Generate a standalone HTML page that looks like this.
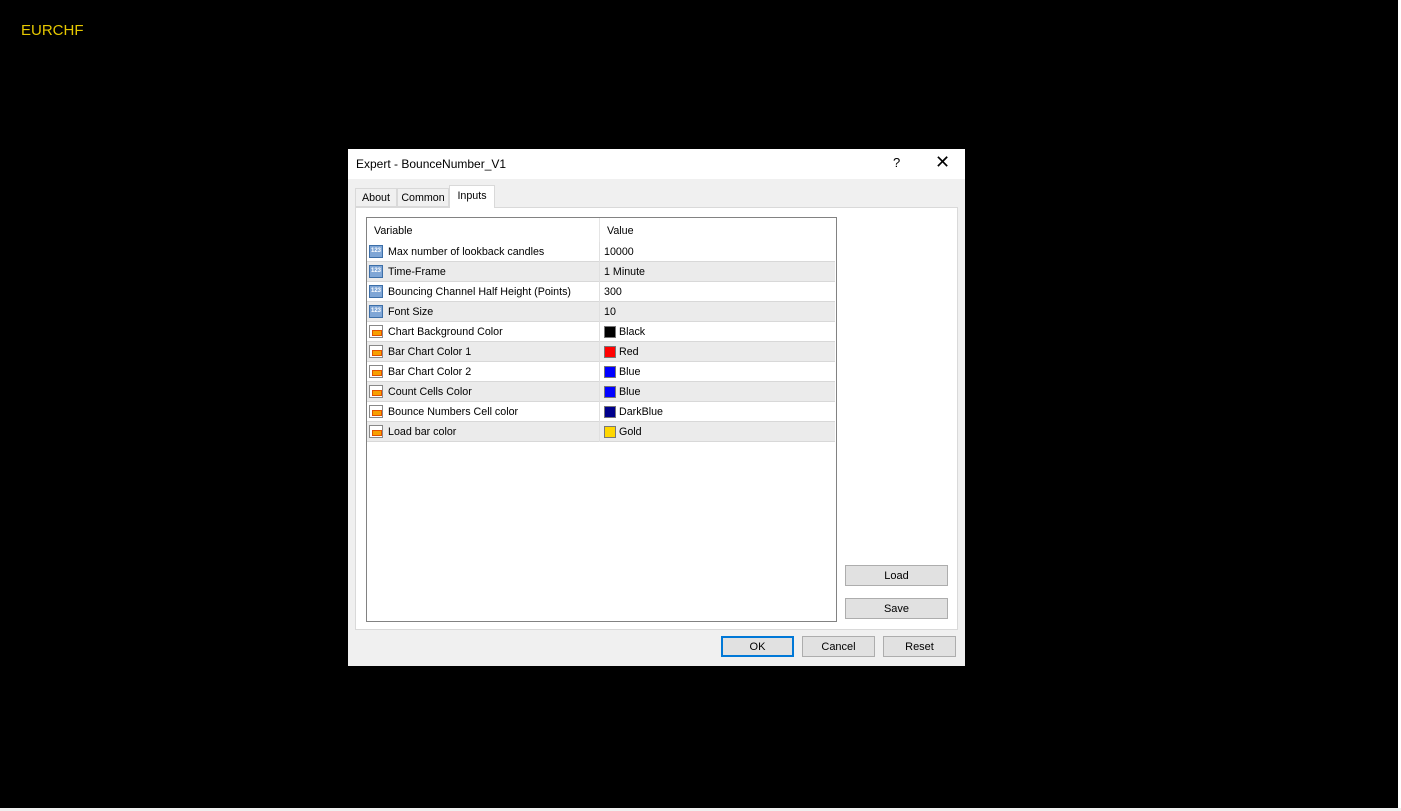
<!DOCTYPE html><html><head><style>
body{margin:0;width:1401px;height:811px;background:#000;position:relative;overflow:hidden;font-family:"Liberation Sans",sans-serif;font-size:10.7px;color:#000}
.a{position:absolute}
.btn{position:absolute;background:#e1e1e1;border:1px solid #adadad;box-sizing:border-box;text-align:center;line-height:20px;font-size:11px}
.row{position:absolute;left:0;width:468px;height:20px;border-bottom:1px solid #d8d8d8;box-sizing:border-box;line-height:21px}
.row:before{content:"";position:absolute;left:232px;top:0;width:1px;height:20px;background:#e0e0e0}
.row .v{position:absolute;left:21px}
.row .val{position:absolute;left:237px}
.ic{position:absolute;left:2px;top:3px;width:14px;height:13px;box-sizing:border-box}
.num{background:#7fa6d6;border:1px solid #3d6fa8;font-size:6px;color:#fff;line-height:11px;text-align:center;font-weight:bold}
.col{background:#fff;border:1px solid #888}
.col:after{content:"";position:absolute;left:2px;top:4px;width:8px;height:4px;background:#f7a000;border:1px solid #e05000}
.sw{position:absolute;left:0;top:4px;width:12px;height:12px;border:1px solid #777;box-sizing:border-box}
</style></head><body>
<div class="a" style="left:21px;top:22px;color:#e6c800;font-size:15px">EURCHF</div>
<div class="a" style="left:1398px;top:0;width:3px;height:811px;background:#fff"></div>
<div class="a" style="left:0;top:808px;width:1401px;height:3px;background:#f0f0f0"></div>
<div class="a" style="left:348px;top:149px;width:617px;height:517px;background:#f0f0f0">
 <div class="a" style="left:0;top:0;width:617px;height:30px;background:#fff"></div>
 <div class="a" style="left:8px;top:8px;font-size:12px">Expert - BounceNumber_V1</div>
 <div class="a" style="left:545px;top:6px;font-size:13px">?</div>
 <div class="a" style="left:587px;top:3px;font-size:18px;font-weight:300">✕</div>
 <div class="a" style="left:7px;top:39px;width:42px;height:19px;border:1px solid #d9d9d9;box-sizing:border-box;line-height:19px;text-align:center;background:#f0f0f0">About</div>
 <div class="a" style="left:49px;top:39px;width:52px;height:19px;border:1px solid #d9d9d9;box-sizing:border-box;line-height:19px;text-align:center">Common</div>
 <div class="a" style="left:101px;top:36px;width:46px;height:23px;border:1px solid #d9d9d9;border-bottom:none;box-sizing:border-box;line-height:20px;text-align:center;background:#fff;z-index:2">Inputs</div>
 <div class="a" style="left:7px;top:58px;width:603px;height:423px;background:#fff;border:1px solid #d9d9d9;box-sizing:border-box">
  <div class="a" style="left:10px;top:9px;width:471px;height:405px;border:1px solid #828282;box-sizing:border-box">
   <div class="a" style="left:232px;top:0;width:1px;height:24px;background:#e5e5e5"></div>
   <div class="a" style="left:7px;top:7px">Variable</div>
   <div class="a" style="left:240px;top:7px">Value</div>
   <div class="a" style="left:0;top:24px">
    <div class="row" style="top:0;background:#fff"><div class="ic num">123</div><span class="v">Max number of lookback candles</span><span class="val">10000</span></div>
    <div class="row" style="top:20px;background:#ebebeb"><div class="ic num">123</div><span class="v">Time-Frame</span><span class="val">1 Minute</span></div>
    <div class="row" style="top:40px;background:#fff"><div class="ic num">123</div><span class="v">Bouncing Channel Half Height (Points)</span><span class="val">300</span></div>
    <div class="row" style="top:60px;background:#ebebeb"><div class="ic num">123</div><span class="v">Font Size</span><span class="val">10</span></div>
    <div class="row" style="top:80px;background:#fff"><div class="ic col"></div><span class="v">Chart Background Color</span><span class="val"><span class="sw" style="background:#000"></span><span style="margin-left:15px">Black</span></span></div>
    <div class="row" style="top:100px;background:#ebebeb"><div class="ic col"></div><span class="v">Bar Chart Color 1</span><span class="val"><span class="sw" style="background:#f00"></span><span style="margin-left:15px">Red</span></span></div>
    <div class="row" style="top:120px;background:#fff"><div class="ic col"></div><span class="v">Bar Chart Color 2</span><span class="val"><span class="sw" style="background:#00f"></span><span style="margin-left:15px">Blue</span></span></div>
    <div class="row" style="top:140px;background:#ebebeb"><div class="ic col"></div><span class="v">Count Cells Color</span><span class="val"><span class="sw" style="background:#00f"></span><span style="margin-left:15px">Blue</span></span></div>
    <div class="row" style="top:160px;background:#fff"><div class="ic col"></div><span class="v">Bounce Numbers Cell color</span><span class="val"><span class="sw" style="background:#00008b"></span><span style="margin-left:15px">DarkBlue</span></span></div>
    <div class="row" style="top:180px;background:#ebebeb"><div class="ic col"></div><span class="v">Load bar color</span><span class="val"><span class="sw" style="background:#ffd700"></span><span style="margin-left:15px">Gold</span></span></div>
   </div>
  </div>
  <div class="btn" style="left:489px;top:357px;width:103px;height:21px">Load</div>
  <div class="btn" style="left:489px;top:390px;width:103px;height:21px">Save</div>
 </div>
 <div class="btn" style="left:373px;top:487px;width:73px;height:21px;border:2px solid #0078d7;line-height:18px">OK</div>
 <div class="btn" style="left:454px;top:487px;width:73px;height:21px">Cancel</div>
 <div class="btn" style="left:535px;top:487px;width:73px;height:21px">Reset</div>
</div>
</body></html>
